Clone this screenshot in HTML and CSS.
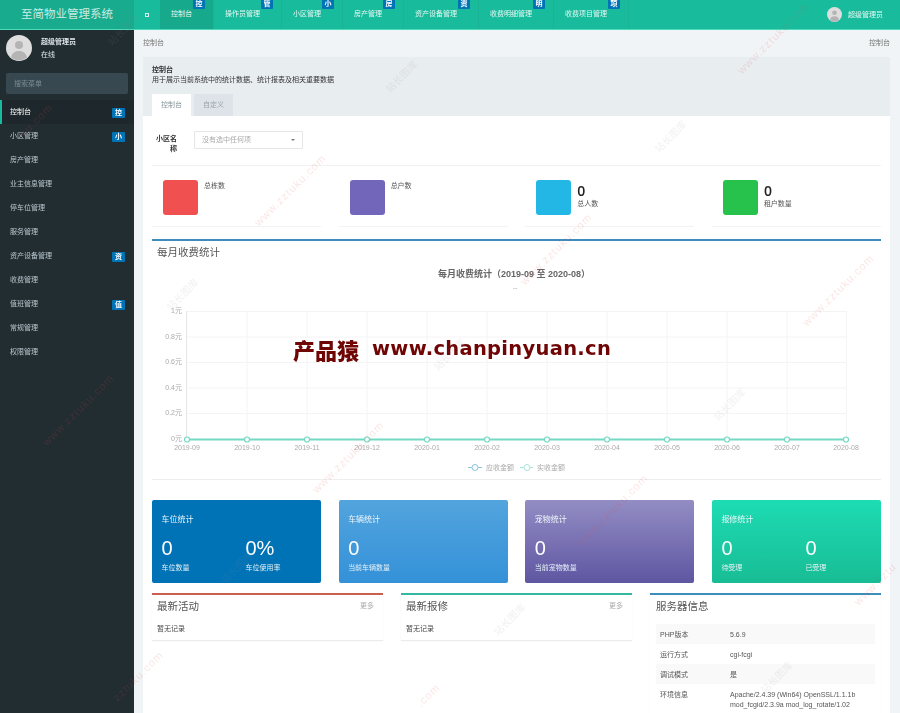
FILE: index.html
```html
<!DOCTYPE html>
<html lang="zh-CN">
<head>
<meta charset="utf-8">
<title>至简物业管理系统</title>
<link rel="stylesheet" href="styles.css">
</head>
<body>
<div class="app">
  <header class="topbar">
    <div class="logo">至简物业管理系统</div>
    <nav class="topnav">
      <a class="toggle"><span class="toggle-box"></span></a>
      <a class="topitem active">控制台<b class="topbadge">控</b></a>
      <a class="topitem">操作员管理<b class="topbadge">管</b></a>
      <a class="topitem">小区管理<b class="topbadge">小</b></a>
      <a class="topitem">房产管理<b class="topbadge">房</b></a>
      <a class="topitem">资产设备管理<b class="topbadge">资</b></a>
      <a class="topitem">收费明细管理<b class="topbadge">明</b></a>
      <a class="topitem">收费项目管理<b class="topbadge">项</b></a>
    </nav>
    <div class="topuser">
      <svg class="avatar-small" viewBox="0 0 26 26"><use href="#avatar"/></svg>
      <span>超级管理员</span>
    </div>
  </header>
  <div class="body-row">
    <aside class="sidebar">
      <div class="userpanel">
        <svg class="avatar" viewBox="0 0 26 26">
          <symbol id="avatar" viewBox="0 0 26 26">
            <circle cx="13" cy="13" r="13" fill="#dedede"/>
            <circle cx="13" cy="10" r="4" fill="#b4b4b4"/>
            <path d="M5 22.5c1-5 4.500-6.500 8-6.500s7 1.500 8 6.500a13 13 0 0 1-16 0z" fill="#b4b4b4"/>
          </symbol>
          <use href="#avatar"/>
        </svg>
        <div class="userinfo">
          <div class="username">超级管理员</div>
          <div class="userstate">在线</div>
        </div>
      </div>
      <div class="search">搜索菜单</div>
      <ul class="menu">
        <li class="menu-item current">控制台<b class="menubadge">控</b></li>
        <li class="menu-item">小区管理<b class="menubadge">小</b></li>
        <li class="menu-item">房产管理</li>
        <li class="menu-item">业主信息管理</li>
        <li class="menu-item">停车位管理</li>
        <li class="menu-item">服务管理</li>
        <li class="menu-item">资产设备管理<b class="menubadge">资</b></li>
        <li class="menu-item">收费管理</li>
        <li class="menu-item">值班管理<b class="menubadge">值</b></li>
        <li class="menu-item">常规管理</li>
        <li class="menu-item">权限管理</li>
      </ul>
    </aside>
    <main class="content">
      <div class="crumbs"><span>控制台</span><span>控制台</span></div>
      <section class="panel">
        <div class="panel-head">
          <div class="panel-title">控制台</div>
          <div class="panel-desc">用于展示当前系统中的统计数据、统计报表及相关重要数据</div>
          <div class="tabs">
            <span class="tab on">控制台</span>
            <span class="tab">自定义</span>
          </div>
        </div>
        <div class="panel-body">
          <div class="filter">
            <label class="filter-label">小区名称</label>
            <div class="select">没有选中任何项<i class="caret"></i></div>
          </div>
          <div class="stats">
            <div class="stat"><span class="stat-icon red"></span><div class="stat-text"><div class="stat-num"></div><div class="stat-name first">总栋数</div></div></div>
            <div class="stat"><span class="stat-icon purple"></span><div class="stat-text"><div class="stat-num"></div><div class="stat-name first">总户数</div></div></div>
            <div class="stat"><span class="stat-icon sky"></span><div class="stat-text"><div class="stat-num">0</div><div class="stat-name">总人数</div></div></div>
            <div class="stat"><span class="stat-icon green"></span><div class="stat-text"><div class="stat-num">0</div><div class="stat-name">租户数量</div></div></div>
          </div>
          <div class="chartbox">
            <h3 class="box-title">每月收费统计</h3>
            <svg class="chart" viewBox="152 258 729 221">
              <text class="c-title" x="514" y="276" text-anchor="middle">每月收费统计（2019-09 至 2020-08）</text>
              <text class="c-sub" x="515" y="289" text-anchor="middle">--</text>
              <g class="c-grid">
                <path d="M187 310.500H846M187 336H846M187 361.500H846M187 387H846M187 412.500H846"/>
                <path d="M247 310V438M307 310V438M367 310V438M427 310V438M487 310V438M547 310V438M607 310V438M667 310V438M727 310V438M787 310V438M846.500 310V438"/>
              </g>
              <path class="c-axis" d="M186.500 310V439"/>
              <g class="c-label" text-anchor="end">
                <text x="182" y="312">1元</text>
                <text x="182" y="338">0.8元</text>
                <text x="182" y="363">0.6元</text>
                <text x="182" y="389">0.4元</text>
                <text x="182" y="414">0.2元</text>
                <text x="182" y="440">0元</text>
              </g>
              <g class="c-label" text-anchor="middle">
                <text x="187" y="449">2019-09</text><text x="247" y="449">2019-10</text><text x="307" y="449">2019-11</text><text x="367" y="449">2019-12</text>
                <text x="427" y="449">2020-01</text><text x="487" y="449">2020-02</text><text x="547" y="449">2020-03</text><text x="607" y="449">2020-04</text>
                <text x="667" y="449">2020-05</text><text x="727" y="449">2020-06</text><text x="787" y="449">2020-07</text><text x="846" y="449">2020-08</text>
              </g>
              <path class="c-line" d="M187 438.500H846"/>
              <g class="c-dots">
                <circle cx="187" cy="438.500" r="2.500"/><circle cx="247" cy="438.500" r="2.500"/><circle cx="307" cy="438.500" r="2.500"/><circle cx="367" cy="438.500" r="2.500"/>
                <circle cx="427" cy="438.500" r="2.500"/><circle cx="487" cy="438.500" r="2.500"/><circle cx="547" cy="438.500" r="2.500"/><circle cx="607" cy="438.500" r="2.500"/>
                <circle cx="667" cy="438.500" r="2.500"/><circle cx="727" cy="438.500" r="2.500"/><circle cx="787" cy="438.500" r="2.500"/><circle cx="846" cy="438.500" r="2.500"/>
              </g>
              <g class="c-legend">
                <path class="lg-blue" d="M468 466.500H482"/><circle class="lg-blue" cx="475" cy="466.500" r="3"/>
                <text x="486" y="469">应收金额</text>
                <path class="lg-teal" d="M520 466.500H533"/><circle class="lg-teal" cx="527" cy="466.500" r="3"/>
                <text x="537" y="469">实收金额</text>
              </g>
            </svg>
          </div>
          <div class="cards">
            <div class="card c1">
              <div class="card-title">车位统计</div>
              <div class="card-cols">
                <div class="card-col"><div class="card-num">0</div><div class="card-sub">车位数量</div></div>
                <div class="card-col"><div class="card-num">0%</div><div class="card-sub">车位使用率</div></div>
              </div>
            </div>
            <div class="card c2">
              <div class="card-title">车辆统计</div>
              <div class="card-cols">
                <div class="card-col"><div class="card-num">0</div><div class="card-sub">当前车辆数量</div></div>
              </div>
            </div>
            <div class="card c3">
              <div class="card-title">宠物统计</div>
              <div class="card-cols">
                <div class="card-col"><div class="card-num">0</div><div class="card-sub">当前宠物数量</div></div>
              </div>
            </div>
            <div class="card c4">
              <div class="card-title">报修统计</div>
              <div class="card-cols">
                <div class="card-col"><div class="card-num">0</div><div class="card-sub">待受理</div></div>
                <div class="card-col"><div class="card-num">0</div><div class="card-sub">已受理</div></div>
              </div>
            </div>
          </div>
          <div class="lower">
            <div class="box b-red">
              <div class="box-head"><h3 class="box-title">最新活动</h3><a class="more">更多</a></div>
              <div class="box-row">暂无记录</div>
            </div>
            <div class="box b-teal">
              <div class="box-head"><h3 class="box-title">最新报修</h3><a class="more">更多</a></div>
              <div class="box-row">暂无记录</div>
            </div>
            <div class="box b-blue">
              <div class="box-head"><h3 class="box-title">服务器信息</h3></div>
              <table class="info">
                <tr><td>PHP版本</td><td>5.6.9</td></tr>
                <tr><td>运行方式</td><td>cgi-fcgi</td></tr>
                <tr><td>调试模式</td><td>是</td></tr>
                <tr><td>环境信息</td><td>Apache/2.4.39 (Win64) OpenSSL/1.1.1b mod_fcgid/2.3.9a mod_log_rotate/1.02</td></tr>
              </table>
            </div>
          </div>
        </div>
      </section>
    </main>
  </div>
  <div class="brandmark"><span class="bm-cn">产品猿</span><span class="bm-en">www.chanpinyuan.cn</span></div>
  <span class="wm r1">www.zztuku.com</span><span class="wm r2">www.zztuku.com</span><span class="wm r3">www.zztuku.com</span>
  <span class="wm r4">www.zztuku.com</span><span class="wm r5">www.zztuku.com</span><span class="wm r6">ku.com</span>
  <span class="wm r7">www.zztuku.com</span><span class="wm r8">www.zztuku.com</span><span class="wm r9">www.zztu</span>
  <span class="wm r10">zztuku.com</span><span class="wm r11">.com</span>
  <span class="wg g1">站长图库</span><span class="wg g2">站长图库</span><span class="wg g3">站长图库</span><span class="wg g4">站长图库</span>
  <span class="wg g5">站长图库</span><span class="wg g6">站长图库</span><span class="wg g7">站长图库</span><span class="wg g8">站长图库</span><span class="wg g9">站长图库</span>
</div>
</body>
</html>
```
FILE: styles.css
```css
* { box-sizing: border-box; }
html, body { margin: 0; height: 713px; overflow: hidden; }
body {
  font-family: "Liberation Sans", "Noto Sans CJK SC", sans-serif;
  font-size: 7px;
  line-height: 10px;
  color: #333;
  background: #f1f4f6;
}
.app { position: relative; width: 900px; height: 713px; overflow: hidden; filter: blur(0.4px); }

.topbar { display: flex; height: 30px; background: #18bc9c; border-bottom: 1px solid #4fd9bd; }
.logo { width: 134px; background: #18ab8e; color: #c9ece3; font-size: 11.500px; line-height: 29px; text-align: center; }
.topnav { display: flex; flex: 1; }
.toggle { width: 26px; display: flex; align-items: center; justify-content: center; }
.toggle-box { width: 4px; height: 4px; border: 1px solid #d8f3ec; }
.topitem { position: relative; padding: 0 22px 0 11px; line-height: 27px; color: #e6f7f3; box-shadow: inset -1px 0 0 #1ab394; white-space: nowrap; }
.topitem.active { background: #17a98c; }
.topbadge { position: absolute; top: 0; right: 9px; width: 12px; height: 9px; background: #0073b7; color: #fff; font-size: 7px; line-height: 8px; text-align: center; border-radius: 0 0 1px 1px; }
.topuser { display: flex; align-items: center; gap: 6px; padding-right: 17px; color: #e6f7f3; }
.avatar-small { width: 15px; height: 15px; }

.body-row { display: flex; height: 683px; }
.sidebar { width: 134px; flex: none; background: #222d32; }
.userpanel { display: flex; padding: 5px 6px 0; height: 43px; }
.avatar { width: 26px; height: 26px; flex: none; }
.userinfo { margin-left: 9px; padding-top: 2px; color: #dfe6e9; }
.username { font-weight: bold; margin-bottom: 3px; }
.search { margin: 0 6px; height: 21px; padding-left: 8px; line-height: 21px; background: #374850; border-radius: 2px; color: #7d8c94; }
.menu { list-style: none; margin: 6px 0 0; padding: 0; }
.menu-item { display: flex; justify-content: space-between; align-items: center; height: 24px; padding: 0 9px 0 10px; color: #b8c7ce; }
.menu-item.current { background: #1e282c; color: #fff; box-shadow: inset 2px 0 0 #18bc9c; }
.menubadge { width: 13px; height: 10px; margin-top: 2px; background: #0073b7; color: #fff; font-size: 7px; line-height: 10px; text-align: center; border-radius: 1px; }

.content { flex: 1; min-width: 0; padding: 0 10px 0 9px; }
.crumbs { display: flex; justify-content: space-between; height: 27px; padding-top: 8px; color: #777; }
.panel { background: #fff; }
.panel-head { height: 59px; padding: 8px 9px 0; background: #e8edf0; color: #333; }
.panel-title { font-weight: bold; }
.tabs { display: flex; gap: 3px; margin-top: 9px; }
.tab { width: 39px; height: 22px; line-height: 22px; text-align: center; background: #dde3e9; color: #99a3a8; }
.tab.on { background: #fff; color: #88949a; }
.panel-body { padding: 15px 9px 0; }

.filter { display: flex; align-items: flex-start; padding-bottom: 16px; border-bottom: 1px solid #f1f1f1; height: 35px; }
.filter-label { width: 25px; padding: 3px 0 0 3px; font-weight: bold; text-align: right; color: #333; }
.select { position: relative; width: 109px; height: 18px; margin-left: 17px; padding-left: 7px; border: 1px solid #e6e6e6; border-radius: 1px; line-height: 16px; color: #aaa; }
.caret { position: absolute; right: 7px; top: 7px; border: 2px solid transparent; border-top: 2px solid #777; }

.stats, .cards { display: grid; grid-template-columns: repeat(4, minmax(0, 1fr)); column-gap: 17.500px; }
.stat { display: flex; height: 61px; padding: 14px 0 0 11px; border-bottom: 1px solid #f3f3f3; }
.stat-icon { width: 35px; height: 35px; border-radius: 3px; }
.red { background: #f05050; }
.purple { background: #7266ba; }
.sky { background: #23b7e5; }
.green { background: #27c24c; }
.stat-text { margin-left: 6px; }
.stat-num { height: 18px; padding-top: 4px; font-size: 14px; line-height: 14px; font-weight: 600; font-family: "Open Sans", sans-serif; color: #222; }
.stat-name { margin-top: 1px; color: #555; }
.stat-name.first { margin-top: -17px; }

.chartbox { margin-top: 12px; border-top: 2px solid #3c8dbc; border-bottom: 1px solid #eee; height: 241px; }
.box-title { margin: 0; font-size: 10.500px; line-height: 14px; font-weight: normal; color: #555; padding: 4px 0 0 5px; }
.chart { display: block; width: 729px; height: 221px; }
.c-title { font-size: 9px; font-weight: bold; fill: #666; }
.c-sub { font-size: 7px; fill: #aaa; }
.c-grid path { fill: none; stroke: #f4f4f4; stroke-width: 1; }
.c-axis { fill: none; stroke: #e6e6e6; }
.c-label text, .c-legend text { font-size: 7px; fill: #aaa; }
.c-line { fill: none; stroke: #74d9c2; stroke-width: 2.200; }
.c-dots circle { fill: #fff; stroke: #74d9c2; stroke-width: 1.200; }
.lg-blue { fill: #fff; stroke: #8cc4dc; }
.lg-teal { fill: #fff; stroke: #a5e6d8; }

.cards { margin-top: 20px; }
.card { height: 83px; padding: 14px 9.500px 0; border-radius: 2px; color: #fff; }
.c1 { background: #0073b7; }
.c2 { background: linear-gradient(#52a4dd, #3491d8); }
.c3 { background: linear-gradient(#938dc4, #5f56a2); }
.c4 { background: linear-gradient(#1ddcb4, #18bc94); }
.card-title { font-size: 8px; line-height: 12px; color: #eef6fa; }
.card-cols { display: flex; margin-top: 11px; }
.card-col { flex: none; width: 84px; }
.card-cols { overflow: visible; }
.card-num { font-size: 20px; line-height: 22px; font-weight: 300; }
.card-sub { margin-top: 4px; color: #e4f0f6; }

.lower { display: grid; grid-template-columns: repeat(3, minmax(0, 1fr)); gap: 18px; margin-top: 10px; align-items: start; }
.box { border-top: 2px solid; box-shadow: 0 1px 1px rgba(0,0,0,.08); padding-bottom: 3px; }
.b-red { border-color: #c9604f; }
.b-teal { border-color: #35b8a0; }
.b-blue { border-color: #3c8dbc; padding: 0 6px 0; }
.box-head { display: flex; justify-content: space-between; height: 22px; }
.b-blue .box-title { padding-left: 0; }
.more { padding: 6px 9px 0 0; color: #aaa; }
.box-row { padding: 7px 5px 0; height: 20px; color: #444; }
.info { width: 100%; border-collapse: collapse; margin-top: 7px; color: #555; }
.info td { padding: 6px 4px 4px; vertical-align: top; }
.info td:first-child { width: 70px; }
.info tr:nth-child(odd) { background: #f9f9f9; }

.brandmark { position: absolute; left: 293px; top: 336px; display: flex; align-items: center; gap: 13px; line-height: 26px; font-weight: bold; color: #6f0505; white-space: nowrap; }
.bm-cn { font-family: "Noto Sans CJK SC", sans-serif; font-size: 22px; font-weight: 900; }
.bm-en { font-family: "DejaVu Sans", sans-serif; font-size: 19.500px; letter-spacing: .3px; }

.wm, .wg { position: absolute; transform: translate(-50%, -50%) rotate(-45deg); white-space: nowrap; pointer-events: none; }
.wm { font-size: 11px; letter-spacing: 1px; line-height: 12px; color: rgba(226, 80, 80, .15); }
.wg { font-size: 10px; line-height: 12px; color: rgba(140, 140, 140, .13); }
.r1 { left: 290px; top: 190px; }
.r2 { left: 556px; top: 249px; }
.r3 { left: 838px; top: 290px; }
.r4 { left: 773px; top: 38px; }
.r5 { left: 78px; top: 410px; }
.r6 { left: 36px; top: 120px; }
.r7 { left: 348px; top: 457px; }
.r8 { left: 612px; top: 510px; }
.r9 { left: 875px; top: 584px; }
.r10 { left: 138px; top: 676px; }
.r11 { left: 428px; top: 695px; }
.g1 { left: 124px; top: 30px; }
.g2 { left: 402px; top: 77px; }
.g3 { left: 671px; top: 137px; }
.g4 { left: 183px; top: 295px; }
.g5 { left: 450px; top: 355px; }
.g6 { left: 237px; top: 568px; }
.g7 { left: 510px; top: 620px; }
.g8 { left: 777px; top: 678px; }
.g9 { left: 730px; top: 405px; }
```
